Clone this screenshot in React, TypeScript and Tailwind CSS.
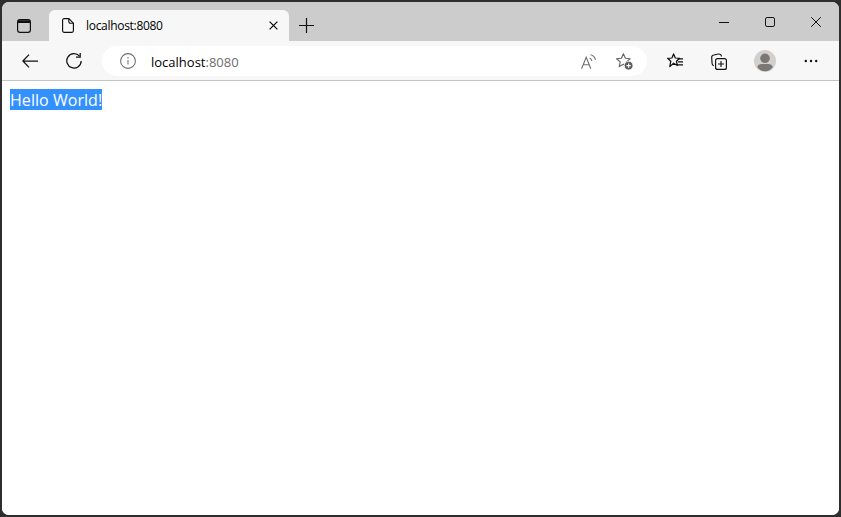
const font = "font-['Open_Sans',sans-serif]";

function TabsIcon() {
  return (
    <svg width="14" height="14" viewBox="0 0 14 14" fill="none" stroke="#111" strokeWidth="1.2">
      <rect x="0.6" y="0.6" width="12.8" height="12.8" rx="2.4" />
      <path d="M1 2.6h12" strokeWidth="2.6" />
    </svg>
  );
}

function PageIcon() {
  return (
    <svg width="12" height="15" viewBox="0 0 12 15" fill="none" stroke="#111" strokeWidth="1.15">
      <path d="M2.2.6h4.6l4.6 4.6v7.6a1.6 1.6 0 0 1-1.6 1.6H2.2a1.6 1.6 0 0 1-1.6-1.6V2.2A1.6 1.6 0 0 1 2.2.6z" />
      <path d="M6.8.6v3a1.6 1.6 0 0 0 1.6 1.6h3" />
    </svg>
  );
}

function CloseTabIcon() {
  return (
    <svg width="9" height="9" viewBox="0 0 9 9" fill="none" stroke="#111" strokeWidth="1.25">
      <path d="M.6.6l7.8 7.8M8.4.6.6 8.4" />
    </svg>
  );
}

function PlusIcon() {
  return (
    <svg width="15" height="15" viewBox="0 0 15 15" fill="none" stroke="#111" strokeWidth="1.2">
      <path d="M7.5 0v15M0 7.5h15" />
    </svg>
  );
}

function MinimizeIcon() {
  return (
    <svg width="10" height="10" viewBox="0 0 10 10" fill="none" stroke="#111" strokeWidth="1">
      <path d="M0 5.5h10" />
    </svg>
  );
}

function MaximizeIcon() {
  return (
    <svg width="10" height="10" viewBox="0 0 10 10" fill="none" stroke="#111" strokeWidth="1">
      <rect x="0.5" y="0.5" width="9" height="9" rx="1.6" />
    </svg>
  );
}

function CloseIcon() {
  return (
    <svg width="10" height="10" viewBox="0 0 10 10" fill="none" stroke="#111" strokeWidth="1">
      <path d="M.2.2l9.6 9.6M9.8.2.2 9.8" />
    </svg>
  );
}

function BackIcon() {
  return (
    <svg width="16" height="14" viewBox="0 0 16 14" fill="none" stroke="#111" strokeWidth="1.25">
      <path d="M16 7H1M7 .6.9 7 7 13.4" />
    </svg>
  );
}

function ReloadIcon() {
  return (
    <svg width="16" height="16" viewBox="0 0 16 16" fill="none" stroke="#111" strokeWidth="1.25">
      <path d="M13.5 3.2A7.2 7.2 0 1 0 15.2 8" />
      <path d="M14.2 0v4H10" />
    </svg>
  );
}

function InfoIcon() {
  return (
    <svg width="16" height="16" viewBox="0 0 16 16" fill="none" stroke="#707070" strokeWidth="1.1">
      <circle cx="8" cy="8" r="7.4" />
      <path d="M8 7v4.6" />
      <path d="M8 4.2v1.2" strokeWidth="1.2" />
    </svg>
  );
}

function ReadAloudIcon() {
  return (
    <svg width="16" height="15" viewBox="0 0 16 15" fill="none" stroke="#707070" strokeWidth="1.1">
      <path d="M.6 14.8 5.2 3.2l4.6 11.6M2.2 10.8h6" />
      <path d="M8.6 4.2c1 .3 1.9 1.2 2.3 2.6M9.6.8c2.4.5 4.2 2.4 4.9 5" />
    </svg>
  );
}

function AddFavIcon() {
  return (
    <svg width="17" height="17" viewBox="0 0 17 17" fill="none">
      <path
        d="M7.4.8l2 4.4 4.8.5-3.6 3.2 1 4.7-4.2-2.4-4.2 2.4 1-4.7L.6 5.7l4.8-.5z"
        stroke="#666"
        strokeWidth="1.15"
        strokeLinejoin="round"
      />
      <circle cx="12.6" cy="12.6" r="4.4" fill="#5e5e5e" stroke="#ffffff" strokeWidth="0.8" />
      <path d="M12.6 10.5v4.2M10.5 12.6h4.2" stroke="#fff" strokeWidth="1.1" />
    </svg>
  );
}

function FavoritesIcon() {
  return (
    <svg width="16" height="16" viewBox="0 0 16 16" fill="none" stroke="#111" strokeWidth="1.25">
      <path d="M6.6.9l1.7 4.1 4.3.3-3.2 2.9 1 4.3-3.8-2.3-3.8 3.4 1-5.4L.6 5.3l4.3-.3z" strokeLinejoin="round" />
      <path d="M10.8 5.8H16M11 8.8h5M10.8 11.8H16" />
    </svg>
  );
}

function CollectionsIcon() {
  return (
    <svg width="16" height="17" viewBox="0 0 16 17" fill="none" stroke="#111" strokeWidth="1.15">
      <path d="M2.8 12.8A2.4 2.4 0 0 1 1.1 10.6L.7 4.8A2.6 2.6 0 0 1 2.9 2l4.6-1a2.6 2.6 0 0 1 3 2.6" />
      <rect x="4.6" y="5.6" width="10.8" height="10.8" rx="2" />
      <path d="M10 8v6M7 11h6" />
    </svg>
  );
}

function Avatar() {
  return (
    <svg width="22" height="22" viewBox="0 0 22 22">
      <circle cx="11" cy="11" r="11" fill="#d2d0ce" />
      <circle cx="11" cy="8.3" r="4.8" fill="#7a7775" />
      <path d="M3.4 17.3c0-2.4 2.4-3.3 4.4-3.3h6.4c2 0 4.4.9 4.4 3.3-1.8 2.6-4.4 3.9-7.6 3.9s-5.8-1.3-7.6-3.9z" fill="#7a7775" />
    </svg>
  );
}

function DotsIcon() {
  return (
    <svg width="14" height="4" viewBox="0 0 14 4" fill="#111">
      <circle cx="1.8" cy="2" r="1.2" />
      <circle cx="7" cy="2" r="1.2" />
      <circle cx="12.2" cy="2" r="1.2" />
    </svg>
  );
}

export default function App() {
  return (
    <div className={`h-[517px] w-[841px] overflow-hidden bg-[#2e2e2e] p-[2px] ${font}`}>
      <div className="flex h-full flex-col overflow-hidden rounded-[7px] bg-white">
        {/* tab strip */}
        <div className="flex h-[39px] shrink-0 items-end bg-[#cccccc]">
          <div className="flex h-[31px] w-[47px] items-center justify-center pr-[3px] pt-[1px]">
            <TabsIcon />
          </div>
          <div className="flex h-[31px] w-[240px] items-center rounded-t-[6px] bg-[#f7f7f7] pr-[11px] pl-[13px]">
            <PageIcon />
            <span className="ml-[12px] flex-1 text-[12px] tracking-[-0.3px] text-black">localhost:8080</span>
            <CloseTabIcon />
          </div>
          <div className="flex h-[31px] w-[35px] items-center justify-center">
            <PlusIcon />
          </div>
          <div className="flex-1" />
          <div className="flex h-[39px] items-center gap-[36px] pt-[1px] pr-[18px]">
            <MinimizeIcon />
            <MaximizeIcon />
            <CloseIcon />
          </div>
        </div>
        {/* toolbar */}
        <div className="flex h-[40px] shrink-0 items-center border-b border-[#c4c4c4] bg-[#f7f7f7] pt-[1px] pl-[20px]">
          <BackIcon />
          <div className="ml-[28px]">
            <ReloadIcon />
          </div>
          <div className="ml-[20px] flex h-[30px] w-[545px] items-center rounded-full bg-white pr-[14px] pl-[18px]">
            <InfoIcon />
            <span className="ml-[15px] flex-1 pt-[1px] text-[13px] leading-[18px] text-black">
              localhost<span className="text-[#6e6e6e]">:8080</span>
            </span>
            <ReadAloudIcon />
            <div className="ml-[19px]">
              <AddFavIcon />
            </div>
          </div>
          <div className="ml-[20px]">
            <FavoritesIcon />
          </div>
          <div className="ml-[28px]">
            <CollectionsIcon />
          </div>
          <div className="ml-[27px]">
            <Avatar />
          </div>
          <div className="ml-[28px]">
            <DotsIcon />
          </div>
        </div>
        {/* page */}
        <div className="flex-1 bg-white pt-[8px] pl-[8px]">
          <div className="h-[21px] w-fit bg-[#3390ff] text-[16px] leading-[23px] tracking-[0.05px] text-white">
            Hello World!
          </div>
        </div>
      </div>
    </div>
  );
}
